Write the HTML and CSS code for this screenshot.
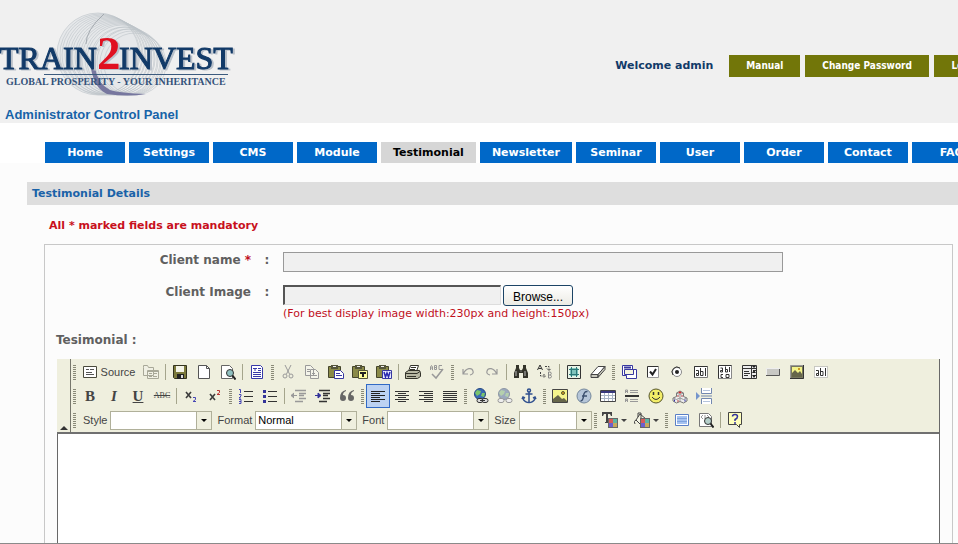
FILE: index.html
```html
<!DOCTYPE html>
<html lang="en">
<head>
<meta charset="utf-8">
<title>Administrator Control Panel</title>
<link rel="stylesheet" href="styles.css">
</head>
<body>
<header class="header">
  <div class="brand">
    <svg class="logo" width="240" height="90" viewBox="0 10 240 90" role="img" aria-label="Train2Invest">
      <g fill="none" stroke="#bcc3c8" stroke-width=".6">
        <circle cx="98" cy="54" r="41" fill="#e6e8ea"/><circle cx="100" cy="54" r="40"/><circle cx="102" cy="55" r="40"/><circle cx="104" cy="55" r="39"/><circle cx="106" cy="56" r="39"/><circle cx="108" cy="56" r="38"/><circle cx="110" cy="57" r="38"/><circle cx="112" cy="57" r="37"/><circle cx="114" cy="58" r="37"/><circle cx="116" cy="58" r="36"/><circle cx="118" cy="59" r="36"/><circle cx="120" cy="59" r="35"/><circle cx="122" cy="60" r="35"/><circle cx="124" cy="61" r="34"/><circle cx="126" cy="61" r="34"/><circle cx="128" cy="62" r="33"/><circle cx="130" cy="62" r="33"/><circle cx="132" cy="63" r="32"/><circle cx="135" cy="64" r="31"/>
      </g>
      <path d="M104 14Q86 30 86 44" fill="none" stroke="#a3a9af"/>
      <path d="M91 68Q94 88 107 94Q128 97 146 94Q120 93 110 90Q98 84 95 68Z" fill="#77779f"/>
      <g class="logo-word">
        <text x="-1" y="69">TRAIN</text><text x="119" y="69">INVEST</text>
        <text x="97" y="69" class="logo-two">2</text>
      </g>
      <path d="M44 74.500H228" stroke="#3c5b7e" stroke-width="1"/>
      <text x="6" y="85" class="logo-tag">GLOBAL PROSPERITY - YOUR INHERITANCE</text>
    </svg>
    <h1 class="brand-title">Administrator Control Panel</h1>
  </div>
  <div class="account">
    <span class="welcome">Welcome admin</span>
    <a class="account-link" href="#">Manual</a>
    <a class="account-link" href="#">Change Password</a>
    <a class="account-link" href="#">Logout</a>
  </div>
</header>
<nav class="nav">
  <a href="#">Home</a><a href="#">Settings</a><a href="#">CMS</a><a href="#">Module</a><a href="#" class="current">Testimonial</a><a href="#">Newsletter</a><a href="#">Seminar</a><a href="#">User</a><a href="#">Order</a><a href="#">Contact</a><a href="#">FAQ</a>
</nav>
<main class="main">
  <h2 class="section-title">Testimonial Details</h2>
  <p class="notice">All * marked fields are mandatory</p>
  <form class="panel">
    <div class="fields">
      <label class="label" for="client">Client name <span class="req">*</span></label><span class="colon">:</span>
      <input class="text-input" id="client" type="text">
      <label class="label" for="image">Client Image</label><span class="colon">:</span>
      <div>
        <div class="file">
          <input class="file-path" id="image" type="text">
          <button class="browse" type="button">Browse...</button>
        </div>
        <p class="hint">(For best display image width:230px and height:150px)</p>
      </div>
    </div>
    <label class="editor-label" for="body">Tesimonial :</label>
    <div class="editor">
      <div class="toolbar">
        <button class="collapse" type="button" aria-label="Collapse toolbar"></button>
        <div class="tools">
          <div class="row">
            <i class="handle"></i>
            <button type="button" class="tool source"><svg viewBox="0 0 16 16"><path d="M1.500 2.500h13v11h-13z" fill="#fff" stroke="#4a4a3c"/><path d="M4 5.500h3m1 0h4M4 8.500h6M4 10.500h8" stroke="#555"/></svg>Source</button>
            <button type="button" class="tool"><svg viewBox="0 0 16 16" fill="#f0f0e4" stroke="#a8a898"><path d="M.5 3.500v-2h4l1 2h5v8H.5zM4.500 6.500h11v8h-11z"/><path d="M6 9.500h3m1 0h4m-8 3h3m1 0h4M4.500 7.500h11" /></svg></button>
            <i class="sep"></i>
            <button type="button" class="tool"><svg viewBox="0 0 16 16"><path d="M1.500 1.500h13v13h-12l-1-1z" fill="#7c7a3c" stroke="#33331f"/><path d="M4 2h8v6H4z" fill="#f4f4e8"/><path d="M5 10h7v5H5z" fill="#222"/><path d="M9 11h2v3H9z" fill="#ddd"/></svg></button>
            <button type="button" class="tool"><svg viewBox="0 0 16 16"><path d="M2.500 1.500h8l3 3v10h-11z" fill="#fff" stroke="#555"/><path d="M10.500 1.500v3h3" fill="none" stroke="#555"/></svg></button>
            <button type="button" class="tool"><svg viewBox="0 0 16 16"><path d="M1.500 1.500h8l3 3v10h-11z" fill="#fff" stroke="#666"/><circle cx="10" cy="9" r="3.500" fill="#8fc0c0" stroke="#333"/><path d="M12.500 11.500l3 4" stroke="#222" stroke-width="2"/></svg></button>
            <i class="sep"></i>
            <button type="button" class="tool"><svg viewBox="0 0 16 16"><path d="M2.500 1.500h9l2 2v11h-11z" fill="#fff" stroke="#3638a8"/><path d="M4 4.500h4M6 4v3m3-2.500h3M9 6.500h3m-8 2h8m-8 2h8m-8 2h8" stroke="#3638a8"/></svg></button>
            <i class="handle"></i>
            <button type="button" class="tool"><svg viewBox="0 0 16 16" fill="none" stroke="#999"><path d="M5 1l4.500 9M11 1L6.500 10"/><circle cx="5" cy="12" r="2"/><circle cx="11" cy="12" r="2"/></svg></button>
            <button type="button" class="tool"><svg viewBox="0 0 16 16" fill="#f4f4ea" stroke="#999"><path d="M1.500 1.500h5l3 3v7h-8zM6.500 5.500h5l3 3v6h-8z"/><path d="M3 5.500h3m-3 2h3m2 2h3m-3 2h5"/></svg></button>
            <button type="button" class="tool"><svg viewBox="0 0 16 16"><path d="M.5 2.500h12v11H.5z" fill="#8a8a48" stroke="#44442b"/><path d="M3 1h7v4H3z" fill="#55553a"/><path d="M5 2h3v1H5z" fill="#eee"/><path d="M6.500 6.500h6l3 3v5h-9z" fill="#fff" stroke="#3838a0"/><path d="M8 9.500h4m-4 2h6" stroke="#3838a0"/></svg></button>
            <button type="button" class="tool"><svg viewBox="0 0 16 16"><path d="M.5 2.500h12v11H.5z" fill="#8a8a48" stroke="#44442b"/><path d="M3 1h7v4H3z" fill="#55553a"/><path d="M5 2h3v1H5z" fill="#eee"/><path d="M6.500 6.500h9v8h-9z" fill="#ffff9c" stroke="#55553a"/><path d="M8 9h6m-3 0v4" stroke="#222" stroke-width="2"/></svg></button>
            <button type="button" class="tool"><svg viewBox="0 0 16 16"><path d="M.5 2.500h12v11H.5z" fill="#8a8a48" stroke="#44442b"/><path d="M3 1h7v4H3z" fill="#55553a"/><path d="M5 2h3v1H5z" fill="#eee"/><path d="M6.500 6.500h9v8h-9z" fill="#e8ebff" stroke="#3838a0"/><path d="M8 8l1.500 5L11 9l1.500 4L14 8" fill="none" stroke="#2a2ab0" stroke-width="1.500"/></svg></button>
            <i class="sep"></i>
            <button type="button" class="tool"><svg viewBox="0 0 16 16" stroke="#33332a"><path d="M5.500 1.500h8l-2 6h-8z" fill="#fff"/><path d="M.5 8.500l3-2h11l1 2v4l-3 2H.5z" fill="#b8b8a4"/><path d="M1 9.500h11l3-2M2 12.500h9M6 3.500h5m-6 2h5" fill="none"/></svg></button>
            <button type="button" class="tool"><svg viewBox="0 0 16 16" fill="none" stroke="#999"><path d="M1.500 6V3l1-1.500 1 1.500v3m-2-2h2m2-2.500v4h2v-2h-2 2v-2zM13 1.500h-3v4h3"/><path d="M3 10l4 4 7-9" stroke-width="1.500"/></svg></button>
            <i class="handle"></i>
            <button type="button" class="tool"><svg viewBox="0 0 16 16" fill="none" stroke="#999"><path d="M3 5v5h5M3.500 9.500C6 4 12 3 13 7q1 3-3 4" stroke-width="1.200"/></svg></button>
            <button type="button" class="tool"><svg viewBox="0 0 16 16" fill="none" stroke="#999"><path d="M13 5v5H8M12.500 9.500C10 4 4 3 3 7q-1 3 3 4" stroke-width="1.200"/></svg></button>
            <i class="sep"></i>
            <button type="button" class="tool"><svg viewBox="0 0 16 16" fill="#33332a"><path d="M3 1h3v3l1 2h2l1-2V1h3v3l2 5v5h-5V9H6v5H1V9l2-5z"/><path d="M3 7v5M12 7v5M7.500 7h1" stroke="#bbb"/></svg></button>
            <button type="button" class="tool"><svg viewBox="0 0 16 16" fill="none"><path d="M.5 6L3 1l2.500 5M1.500 4.500h3" stroke="#333"/><path d="M11.500 8v6h2q2-1.500 0-3 1.500-1.500 0-3zm0 3h2" stroke="#888"/><path d="M8 2.500h4v4m-2-2l2 2 2-2M3.500 8v4h5m-2-2l2 2-2 2" stroke="#444" stroke-dasharray="2 1"/></svg></button>
            <i class="sep"></i>
            <button type="button" class="tool"><svg viewBox="0 0 16 16"><path d="M1.500 1.500h13v13h-13z" fill="#e8f4e8" stroke="#333"/><path d="M4 4h8v8H4z" fill="#7fc4bd"/><path d="M3 5.500h10m-10 5h10M5.500 3v10m5-10v10" stroke="#2b7777"/></svg></button>
            <button type="button" class="tool"><svg viewBox="0 0 16 16" stroke="#444"><path d="M8 2.500h7l-7 8H1z" fill="#fff"/><path d="M1 10.500v3h7v-3zM8 13.500l7-8v-3l-7 8z" fill="#c8c8bc"/></svg></button>
            <i class="handle"></i>
            <button type="button" class="tool"><svg viewBox="0 0 16 16"><path d="M1.500 1.500h10v4h4v9h-10v-3h-4z" fill="#fff" stroke="#3838a0"/><path d="M3.500 5.500h9v5h-9z" fill="#f4f4dd" stroke="#3838a0"/><path d="M3 3.500h7" stroke="#3838a0" stroke-width="2"/></svg></button>
            <button type="button" class="tool"><svg viewBox="0 0 16 16"><path d="M3 3h10v10H3z" fill="#fff"/><path d="M2.500 13.500v-11h11" fill="none" stroke="#333"/><path d="M13.500 3v10.500H2" fill="none" stroke="#999"/><path d="M5 7.500l2.500 3L11 5" fill="none" stroke="#222" stroke-width="2"/></svg></button>
            <button type="button" class="tool"><svg viewBox="0 0 16 16"><circle cx="8" cy="8" r="4.500" fill="#fff" stroke="#888"/><path d="M4 11a5 5 0 0 1 7-7" fill="none" stroke="#333"/><circle cx="8" cy="8" r="2" fill="#222"/></svg></button>
            <button type="button" class="tool"><svg viewBox="0 0 16 16"><path d="M1.500 2.500h13v11h-13z" fill="#fff" stroke="#777"/><path d="M1.500 13.500v-11h13" fill="none" stroke="#333"/><path d="M3 6.500h2.500v5H3.500v-2H5M7.500 4v7.500H10v-4H7.500M12.500 4v8" fill="none" stroke="#333"/></svg></button>
            <button type="button" class="tool"><svg viewBox="0 0 16 16" fill="none" stroke="#333"><path d="M1.500 1.500h13v13h-13z" fill="#fff" stroke="#888"/><path d="M1.500 14.500v-13h13M3.500 4h2v4h-2V6.500h2M8.500 2.500V8h2V5.500h-2M12.500 3v5M6 10.500H4v3h2m3-3h3v3H9z"/></svg></button>
            <button type="button" class="tool"><svg viewBox="0 0 16 16" fill="none" stroke="#333"><path d="M1.500 1.500h14v13h-14zM1 4.500h15M10.500 1v14" fill="#eee"/><path d="M3 7.500h5m-5 2h6m-6 2h4m5-5h3m-3 5h3" /><path d="M11 2h4l-2 2zM11 9l2-3 2 3zM11 11h4l-2 3z" fill="#222" stroke="none"/></svg></button>
            <button type="button" class="tool"><svg viewBox="0 0 16 16"><path d="M1.500 4.500h13v7h-13z" fill="#c8c8c4" stroke="#eee"/><path d="M1 11.500h13.500V5" fill="none" stroke="#555"/></svg></button>
            <button type="button" class="tool"><svg viewBox="0 0 16 16"><path d="M1.500 1.500h13v13h-13z" fill="#77775f" stroke="#999"/><path d="M3 3h10v9H3z" fill="#f3f389"/><path d="M3 13V9l3-3 3 3 2-2 2 3v3z" fill="#66664a"/><path d="M9 4h2v2H9z" fill="#cc9d22"/><path d="M1 14.500h13.500V1" fill="none" stroke="#333"/></svg></button>
            <button type="button" class="tool"><svg viewBox="0 0 16 16" fill="none" stroke="#333"><path d="M1.500 2.500h13v11h-13z" fill="#fff" stroke="#999" stroke-dasharray="1 1"/><path d="M3 6.500h2.500v5H3.500v-2H5M7.500 4v7.500H10v-4H7.500M12.500 4v8"/></svg></button>
          </div>
          <div class="row">
            <i class="handle"></i>
            <button type="button" class="tool glyph"><b>B</b></button>
            <button type="button" class="tool glyph"><b><em>I</em></b></button>
            <button type="button" class="tool glyph"><b><u>U</u></b></button>
            <button type="button" class="tool glyph small"><s>ABC</s></button>
            <i class="sep"></i>
            <button type="button" class="tool"><svg viewBox="0 0 16 16"><path d="M3 4l5 6M8 4l-5 6" stroke="#3c3c3c" stroke-width="1.600"/><path d="M10 9.500h2.500v2l-2.500 2h3" fill="none" stroke="#4545b5"/></svg></button>
            <button type="button" class="tool"><svg viewBox="0 0 16 16"><path d="M3 6l5 6M8 6l-5 6" stroke="#3c3c3c" stroke-width="1.600"/><path d="M10 2.500h2.500v2l-2.500 2h3" fill="none" stroke="#b33"/></svg></button>
            <i class="handle"></i>
            <button type="button" class="tool"><svg viewBox="0 0 16 16" fill="none"><path d="M6 3.500h9m-9 5h9m-9 5h9" stroke="#333"/><path d="M1 1.500h1.500V5M1 6.500h2v1.500l-2 2h2M1 11.500h2v4H1m0-2h2" stroke="#4545b5"/></svg></button>
            <button type="button" class="tool"><svg viewBox="0 0 16 16"><path d="M6 3.500h9m-9 5h9m-9 5h9" stroke="#333"/><path d="M1 2h3v3H1zM1 7h3v3H1zM1 12h3v3H1z" fill="#333399"/></svg></button>
            <i class="sep"></i>
            <button type="button" class="tool"><svg viewBox="0 0 16 16" stroke="#999"><path d="M4 2.500h11M8 5.500h7m-7 2h5M8 10.500h7M4 13.500h8" stroke-width="1.500"/><path d="M0 7.500h6M3 5L0 7.500 3 10" fill="#999"/></svg></button>
            <button type="button" class="tool"><svg viewBox="0 0 16 16" stroke="#333"><path d="M4 2.500h11M8 5.500h7m-7 2h5M8 10.500h7M4 13.500h8" stroke-width="1.500"/><path d="M0 7.500h5M3 5l3 2.500L3 10z" fill="#333399" stroke="#333399"/></svg></button>
            <button type="button" class="tool"><svg viewBox="0 0 16 16" fill="#666"><path d="M7 2Q1 3 1 10q0 3 3 3t3-3-3-3q0-3 3-4zM15 2q-6 1-6 8 0 3 3 3t3-3-3-3q0-3 3-4z"/></svg></button>
            <i class="handle"></i>
            <button type="button" class="tool on"><svg viewBox="0 0 16 16" stroke="#222"><path d="M1 3.500h14M1 5.500h9M1 7.500h14M1 9.500h9M1 11.500h14M1 13.500h9"/></svg></button>
            <button type="button" class="tool"><svg viewBox="0 0 16 16" stroke="#333"><path d="M1 3.500h14M4 5.500h8M1 7.500h14M4 9.500h8M1 11.500h14M4 13.500h8"/></svg></button>
            <button type="button" class="tool"><svg viewBox="0 0 16 16" stroke="#333"><path d="M1 3.500h14M6 5.500h9M1 7.500h14M6 9.500h9M1 11.500h14M6 13.500h9"/></svg></button>
            <button type="button" class="tool"><svg viewBox="0 0 16 16" stroke="#333"><path d="M1 3.500h14M1 5.500h14M1 7.500h14M1 9.500h14M1 11.500h14M1 13.500h14"/></svg></button>
            <i class="handle"></i>
            <button type="button" class="tool"><svg viewBox="0 0 16 16"><circle cx="7" cy="6" r="5.500" fill="#3969b5" stroke="#244880"/><path d="M4 2l4 1-1 3-3 2-2-3zM9 5l3 0-1 4-3-1z" fill="#7ac46b"/><rect x="4" y="10.500" width="6" height="4" rx="2" fill="#ddd" stroke="#333"/><rect x="9" y="10.500" width="6" height="4" rx="2" fill="#ddd" stroke="#333"/><path d="M7 12.500h5" stroke="#333"/></svg></button>
            <button type="button" class="tool"><svg viewBox="0 0 16 16"><circle cx="7" cy="6" r="5.500" fill="#9caabd" stroke="#8e97a5"/><path d="M4 2l4 1-1 3-3 2-2-3zM9 5l3 0-1 4-3-1z" fill="#b5d0ad"/><rect x="1" y="10.500" width="6" height="4" rx="2" fill="#eee" stroke="#999"/><rect x="9" y="10.500" width="6" height="4" rx="2" fill="#eee" stroke="#999"/></svg></button>
            <button type="button" class="tool"><svg viewBox="0 0 16 16" fill="none" stroke="#30508f" stroke-width="1.500"><circle cx="8" cy="2.500" r="1.500"/><path d="M8 4v10M4.500 6h7M2 9v2q2 3.500 6 3.500t6-3.500V9M1 11l1-2 2 1m11 1l-1-2-2 1"/></svg></button>
            <i class="handle"></i>
            <button type="button" class="tool"><svg viewBox="0 0 16 16"><path d="M.5 1.500h15v13H.5z" fill="#f5f58d" stroke="#444"/><path d="M1 14v-3l5-4 4 4 2-1 3 3v1z" fill="#66664a"/><circle cx="11" cy="5" r="1.500" fill="#d5a020" stroke="#55552f"/></svg></button>
            <button type="button" class="tool"><svg viewBox="0 0 16 16"><circle cx="8" cy="8" r="7" fill="#b5c5d8" stroke="#75889d"/><path d="M11.500 3.500Q8 3 7.500 8T4.500 13M6 8h5" fill="none" stroke="#3c506f" stroke-width="1.500"/></svg></button>
            <button type="button" class="tool"><svg viewBox="0 0 16 16"><path d="M.5 2.500h15v11H.5z" fill="#fff" stroke="#444"/><path d="M1 3h14v2H1z" fill="#39397d"/><path d="M1 7.500h14M1 10.500h14M4.500 5v8m4-8v8m4-8v8" stroke="#a9b5c5"/></svg></button>
            <button type="button" class="tool"><svg viewBox="0 0 16 16" stroke="#999"><path d="M1 8h14" stroke="#333" stroke-width="2"/><path d="M6 2.500h8m-8 2h8m-8 7h8m-8 2h8M1.500 5V2h2v3m-2-1.500h2M1.500 14v-3h2v3m-2-1.500h2" fill="none"/></svg></button>
            <button type="button" class="tool"><svg viewBox="0 0 16 16"><circle cx="8" cy="8" r="7" fill="#f3ed68" stroke="#55552b"/><path d="M5.500 4v3m5-3v3" stroke="#333" stroke-width="1.500"/><path d="M4 9q4 5 8 0" fill="none" stroke="#333"/></svg></button>
            <button type="button" class="tool"><svg viewBox="0 0 16 16" stroke="#777"><path d="M4.500 5L8 3l3.500 2v3.500L15 10v3l-3.500 2L8 13.500 4.500 15 1 13v-3l3.500-1.500z" fill="#ececec"/><path d="M4.500 5L8 6.500 11.500 5M8 6.500v7M1 10l3.500 1.500L8 10l3.500 1.500L15 10" fill="none" stroke="#999"/><path d="M7 4h2v1H7z" fill="#c33" stroke="#c33"/><path d="M2.500 11.500v2m10.500-2v2" stroke="#33a"/><path d="M5 8h2m2 0h2m-6 5h2" stroke="#b44"/></svg></button>
            <button type="button" class="tool"><svg viewBox="0 0 16 16"><path d="M5.500 0v5.500h10V0m0 16v-5.500h-10V16" fill="#fff" stroke="#7388b0"/><path d="M5 8h11" stroke="#7388b0"/><path d="M0 4l4 4-4 4z" fill="#7595cc"/><path d="M7 2.500h7m-7 11h7" stroke="#b5c4dd"/></svg></button>
          </div>
          <div class="row">
            <i class="handle"></i>
            <label class="combo">Style <span class="pick"><select><option></option></select></span></label>
            <label class="combo">Format <span class="pick"><select><option>Normal</option></select></span></label>
            <label class="combo">Font <span class="pick"><select><option></option></select></span></label>
            <label class="combo">Size <span class="pick narrow"><select><option></option></select></span></label>
            <i class="handle"></i>
            <button type="button" class="tool drop"><svg viewBox="0 0 16 16"><path d="M0 0h10v4H9L8 2H6v8h1v1H3v-1h1V2H2L1 4H0z" fill="#444"/><path d="M6 6h10v10H6z" fill="#666"/><path d="M7 7h4v4H7z" fill="#d65a5a"/><path d="M11 7h4v4h-4z" fill="#5cb4a4"/><path d="M7 11h4v4H7z" fill="#6a5fd0"/><path d="M11 11h4v4h-4z" fill="#c5a85c"/></svg></button>
            <button type="button" class="tool drop"><svg viewBox="0 0 16 16"><path d="M6 2l6 5-5 6-5-5zM4 5V1h3v5M2 8q-3 1-1 4" fill="#f4f4e4" stroke="#444"/><path d="M6 6h10v10H6z" fill="#666"/><path d="M7 7h4v4H7z" fill="#d65a5a"/><path d="M11 7h4v4h-4z" fill="#5cb4a4"/><path d="M7 11h4v4H7z" fill="#6a5fd0"/><path d="M11 11h4v4h-4z" fill="#c5a85c"/></svg></button>
            <i class="handle"></i>
            <button type="button" class="tool"><svg viewBox="0 0 16 16"><path d="M1.500 2.500h13v11h-13z" fill="#fff" stroke="#5a7fc5"/><path d="M3 4h10v8H3z" fill="#a5c2f0"/><path d="M3 6.500h10m-10 3h10" stroke="#7ea3de"/></svg></button>
            <button type="button" class="tool"><svg viewBox="0 0 16 16"><path d="M1.500 1.500h9l3 3v10h-12z" fill="#fff" stroke="#777"/><path d="M5 3L3 5l2 2m2-4v4m2-4l2 2" fill="none" stroke="#999"/><circle cx="10" cy="9" r="3.500" fill="#b5cfca" stroke="#333"/><path d="M12.500 11.500l3 4" stroke="#222" stroke-width="2"/></svg></button>
            <i class="sep"></i>
            <button type="button" class="tool"><svg viewBox="0 0 16 16"><path d="M1.500.5h13v12h-2v3l-3-3h-8z" fill="#ffffbd" stroke="#444"/><path d="M5.500 4.500q0-2 2.500-2t2.500 2T8 7.500V9m0 1v2" fill="none" stroke="#34349d" stroke-width="1.500"/></svg></button>
          </div>
        </div>
      </div>
      <textarea class="content" id="body"></textarea>
    </div>
  </form>
</main>
</body>
</html>
```
FILE: styles.css
```css
* { box-sizing: border-box; }
html { height: 100%; }
body {
  height: 100%;
  margin: 0;
  display: flex;
  flex-direction: column;
  overflow: hidden;
  background: #fff;
  border-bottom: 1px solid #8a8a8a;
  font: 11px/16px Verdana, "DejaVu Sans", sans-serif;
}
h1, h2, p { margin: 0; }
a { text-decoration: none; }
button { font: inherit; cursor: pointer; }

.header {
  display: flex;
  flex: none;
  justify-content: space-between;
  padding-top: 10px;
  background: #f0f0f0;
}
.logo { display: block; }
.logo-word {
  font-family: "Liberation Serif", serif;
  font-size: 32px;
  fill: #123a68;
  stroke: #123a68;
  filter: drop-shadow(2px 1px 0 #b9c0c9);
}
.logo-two { font-size: 47px; font-weight: bold; fill: #e01020; stroke: none; }
.logo-tag { font: bold 10px "Liberation Serif", serif; fill: #34527a; }
.brand-title {
  padding: 7px 5px 0;
  color: #1763a8;
  font: bold 13px/16px "Liberation Sans", sans-serif;
}
.account {
  display: flex;
  align-items: center;
  gap: 5px;
  height: 22px;
  margin: 45px -46px 0 0;
}
.welcome { margin-right: 11px; color: #123a68; font-weight: bold; }
.account-link {
  min-width: 70px;
  padding: 0 17px;
  background: #727609;
  color: #fff;
  font: bold 10px/22px Tahoma, "DejaVu Sans Condensed", sans-serif;
  text-align: center;
  white-space: nowrap;
}

.nav { display: flex; flex: none; gap: 4px; padding: 19px 0 0 45px; }
.nav a {
  flex: none;
  min-width: 80px;
  padding: 0 12px;
  background: #0068c8;
  color: #fff;
  font-weight: bold;
  line-height: 21px;
  text-align: center;
}
.nav .current { background: #d6d6d6; color: #000; }

.main {
  display: flex;
  flex: 1;
  flex-direction: column;
  min-height: 0;
  padding: 19px 0 0 27px;
  background: #fcfcfc;
}
.section-title { padding: 0 5px; background: #dedede; color: #1a62a8; font-size: 11px; line-height: 23px; }
.notice { padding: 13px 22px 10px; color: #c8101c; font-weight: bold; }
.panel {
  display: flex;
  flex: 1;
  flex-direction: column;
  min-height: 0;
  margin: 0 5px 0 17px;
  border: 1px solid #c8c8c8;
  border-bottom: 0;
  padding: 7px 12px 0;
}
.fields { display: grid; grid-template-columns: 194px 32px 1fr; row-gap: 12px; color: #606060; }
.label, .editor-label { color: #606060; font-size: 12px; font-weight: bold; }
.label { text-align: right; }
.req, .hint { color: #c0101c; }
.colon { font-size: 12px; font-weight: bold; text-align: center; }
.text-input { width: 500px; height: 20px; border: 1px solid #999; background: #f0f0f0; }
.file { display: flex; align-items: flex-start; gap: 2px; padding-top: 1px; }
.file-path {
  width: 218px;
  height: 20px;
  border: solid;
  border-width: 2px 1px 1px 2px;
  border-color: #555 #ddd #ddd #555;
  background: #f0f0f0;
}
.browse {
  width: 70px;
  height: 21px;
  padding: 2px 0 0;
  border: 1px solid #1c4466;
  border-radius: 3px;
  background: linear-gradient(#fff, #ecebe4);
  font: 12px/16px "Liberation Sans", sans-serif;
}
.editor-label { margin: 10px 0 11px -1px; }

.editor { display: flex; flex: 1; flex-direction: column; min-height: 0; border-right: 1px solid #686868; }
.toolbar { display: flex; background: #efefde; border-bottom: 2px solid #707070; }
.collapse {
  display: flex;
  align-items: flex-end;
  justify-content: center;
  width: 14px;
  padding: 0 0 2px;
  border: 0;
  border-right: 1px solid #77776c;
  background: #efefde;
}
.collapse::after { content: ""; border: 4px solid transparent; border-top: 0; border-bottom-color: #333; }
.tools { padding-top: 1px; color: #444; font: 11px/24px "Liberation Sans", sans-serif; }
.row { display: flex; align-items: center; height: 24px; }
.handle {
  width: 3px;
  height: 15px;
  margin: 0 2px;
  background: repeating-linear-gradient(#8a8a78 0 1px, transparent 1px 2px);
}
.sep { width: 1px; height: 16px; margin: 0 2px; background: #a5a58c; }
.tool {
  display: flex;
  flex: none;
  align-items: center;
  justify-content: center;
  width: 24px;
  height: 24px;
  padding: 0;
  border: 0;
  background: none;
  color: #444;
}
.tool svg { width: 16px; height: 16px; }
.source { gap: 3px; width: 61px; }
.glyph { font: 15px/20px "Liberation Serif", serif; }
.small { font-size: 8px; }
.on { border: 1px solid #316ac5; background: #bcd2f2; }
.drop { width: 32px; gap: 3px; }
.drop::after { content: ""; border: 3px solid transparent; border-top-color: #444; border-bottom: 0; }
.combo { display: flex; align-items: center; gap: 3px; padding: 0 0 0 5px; }
.pick { position: relative; display: flex; width: 102px; height: 19px; }
.narrow { width: 73px; }
.pick select {
  width: 100%;
  border: 1px solid #b0b09a;
  padding: 0 2px;
  appearance: none;
  background: linear-gradient(#b0b09a, #b0b09a) right 14px top / 1px 100% no-repeat, linear-gradient(#efefde, #efefde) right / 14px 100% no-repeat, #fff;
  color: #000;
  font: 11px/16px "Liberation Sans", sans-serif;
}
.pick::after {
  content: "";
  position: absolute;
  top: 8px;
  right: 5px;
  border: 3px solid transparent;
  border-top-color: #000;
  border-bottom: 0;
  pointer-events: none;
}
.content { flex: 1; width: 100%; min-height: 0; border: 0; border-left: 1px solid #686868; background: #fff; resize: none; }
```
